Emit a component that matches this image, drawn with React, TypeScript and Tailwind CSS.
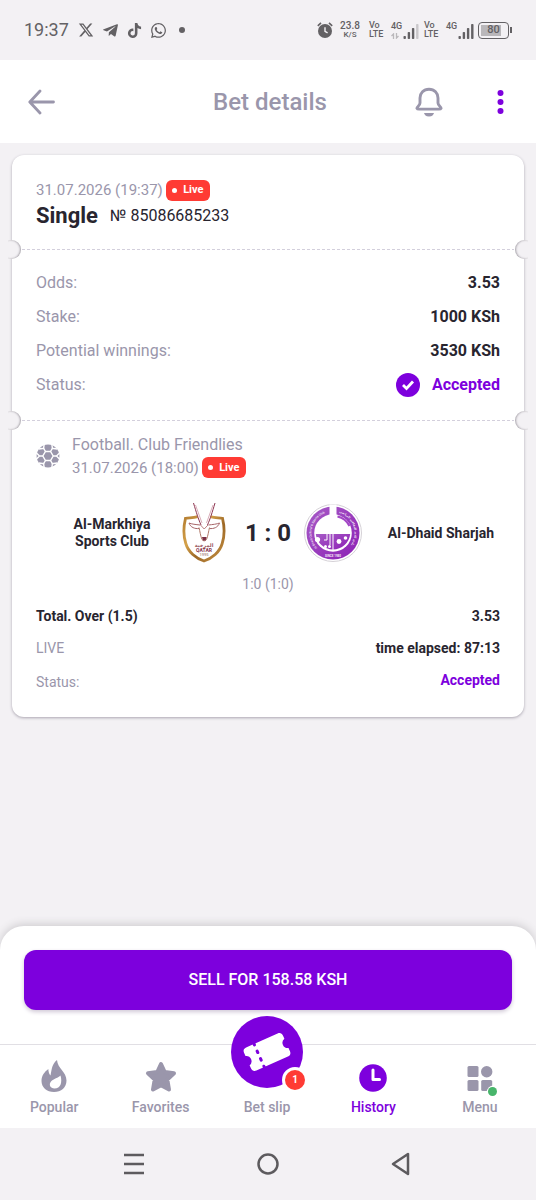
import type { ReactNode } from "react";
import { FaXTwitter, FaTiktok, FaWhatsapp } from "react-icons/fa6";
import { FaTelegramPlane } from "react-icons/fa";

function StatusBar() {
  return (
    <div className="flex h-[60px] items-center justify-between bg-[#f3f1f4] pr-6 pl-6 text-[#636164]">
      <div className="flex items-center">
        <span className="w-[54px] text-lg">19:37</span>
        <FaXTwitter className="mr-2 size-4" />
        <FaTelegramPlane className="mr-2 size-[17px]" />
        <FaTiktok className="mr-2 size-[15px]" />
        <FaWhatsapp className="mr-3 size-[17px]" />
        <span className="size-[6px] rounded-full bg-[#636164]" />
      </div>
      <div className="flex items-center">
        <svg viewBox="0 0 16 16" className="mr-[6px] size-4" aria-label="Alarm">
          <circle cx="8" cy="9" r="7" fill="currentColor" />
          <path d="M.8 3.800 4 .8M15.200 3.800 12 .8" stroke="currentColor" strokeWidth="1.6" />
          <path d="M8 5.2V9.4l2.6 1.5" stroke="#f3f1f4" strokeWidth="1.4" fill="none" />
        </svg>
        <div className="mr-[8px] w-[22px] text-center font-medium">
          <div className="text-[10px] leading-[9px]">23.8</div>
          <div className="text-[8px] leading-[9px]">K/S</div>
        </div>
        <VoLte />
        <div className="mr-[5px] flex h-[17px] w-7 items-end justify-between">
          <Network arrows />
          <Signal bars={3} />
        </div>
        <VoLte />
        <div className="mr-[4px] flex h-[17px] w-7 items-end justify-between">
          <Network />
          <Signal bars={4} />
        </div>
        <div className="flex items-center">
          <div className="flex h-[17px] w-[31px] rounded-[4px] border border-[#636164] p-[2px]">
            <div className="flex w-full items-center justify-center bg-[linear-gradient(90deg,#b9b7ba_80%,transparent_80%)] text-[11px] font-medium">
              80
            </div>
          </div>
          <div className="ml-px h-[6px] w-[2px] bg-[#636164]" />
        </div>
      </div>
    </div>
  );
}

function VoLte() {
  return (
    <div className="mr-[6px] w-4 text-[9px] leading-[9px] font-medium">
      <div>Vo</div>
      <div>LTE</div>
    </div>
  );
}

function Network({ arrows = false }: { arrows?: boolean }) {
  return (
    <div className="flex h-full w-3 flex-col">
      <span className="text-[9px] leading-[9px] font-medium">4G</span>
      {arrows && (
        <svg viewBox="0 0 8 6" className="mt-[2px] h-[6px] w-2" fill="none" stroke="#bab8bb" strokeWidth="1.3">
          <path d="M2.500 6V1L.5 3M5.500 0v5l2-2" />
        </svg>
      )}
    </div>
  );
}

function Signal({ bars }: { bars: number }) {
  const heights = [3, 7, 11, 15];
  return (
    <svg viewBox="0 0 16 16" className="h-4 w-4 shrink-0">
      {heights.map((h, i) => (
        <rect
          key={h}
          x={0.5 + i * 4.2}
          y={16 - h}
          width="2.4"
          height={h}
          rx="0.8"
          fill={i < bars ? "#636164" : "#c9c7ca"}
        />
      ))}
    </svg>
  );
}

function Header() {
  return (
    <header className="grid h-[83px] grid-cols-[1fr_auto_1fr] items-center bg-white pr-6 pl-7 text-[#9a96ab]">
      <button aria-label="Back" className="justify-self-start">
        <svg viewBox="0 0 28 26" className="h-[26px] w-7" fill="none" stroke="currentColor" strokeWidth="2.8" strokeLinecap="round" strokeLinejoin="round">
          <path d="M25.5 13H2M12 2 1.8 13 12 24" />
        </svg>
      </button>
      <h1 className="text-2xl font-medium">Bet details</h1>
      <div className="flex items-center justify-end gap-[54px] pr-2">
        <button aria-label="Notifications">
          <svg viewBox="0 0 28 30" className="h-[30px] w-7" fill="none">
            <path d="M14 2.2c-5.4 0-9 3.8-9 8.8v5.100c0 1.400-.7 2.200-2 3.400-1.800 1.700-1.200 2.600 1 2.600h20c2.200 0 2.800-.9 1-2.600-1.300-1.200-2-2-2-3.400V11c0-5-3.600-8.800-9-8.800Z" stroke="currentColor" strokeWidth="2.900" strokeLinejoin="round" />
            <path d="M9 26h10c-.5 2-1.800 3.400-5 3.400S9.500 28 9 26Z" fill="currentColor" />
          </svg>
        </button>
        <button aria-label="More options" className="text-[#7d00dd]">
          <svg viewBox="0 0 6 26" className="h-[26px] w-[7px]" fill="currentColor">
            <circle cx="3" cy="4" r="3" />
            <circle cx="3" cy="13" r="3" />
            <circle cx="3" cy="22" r="3" />
          </svg>
        </button>
      </div>
    </header>
  );
}

function LiveBadge() {
  return (
    <span className="flex h-[21px] w-11 items-center justify-center gap-[6px] rounded-md bg-[#ff3b34] text-[11px] font-bold text-white">
      <span className="size-[5px] rounded-full bg-white" />
      Live
    </span>
  );
}

function Perforation() {
  return (
    <div className="relative h-5">
      <div className="absolute inset-x-[10px] top-[9px] h-px bg-[repeating-linear-gradient(90deg,#d3cfdc_0_3px,transparent_3px_5px)]" />
      <div className="absolute top-0 -left-1 h-[19px] w-[13px] overflow-hidden">
        <div className="-ml-[6px] size-[19px] rounded-full bg-[#f3f1f4] shadow-[inset_-1px_0_2px_#aaa6ad]" />
      </div>
      <div className="absolute top-0 -right-1 flex h-[19px] w-[13px] overflow-hidden">
        <div className="size-[19px] shrink-0 rounded-full bg-[#f3f1f4] shadow-[inset_1px_0_2px_#aaa6ad]" />
      </div>
    </div>
  );
}

function DetailRow({ label, value }: { label: string; value: ReactNode }) {
  return (
    <div className="flex h-[34px] items-center justify-between">
      <dt className="text-base text-[#9a96ab]">{label}</dt>
      <dd className="flex items-center gap-3 text-base font-bold text-[#28252f]">{value}</dd>
    </div>
  );
}

function Football() {
  return (
    <svg viewBox="0 0 24 24" className="size-6" aria-label="Football">
      <circle cx="12" cy="12" r="11.400" fill="#9a96ab" />
      <g stroke="#fff" strokeWidth="1.400" fill="none">
        <path d="m9.500 7.500h5L17.200 12l-2.700 4.500h-5L6.800 12Z" />
        <path d="M9.500 7.500 7.600 4.300M14.500 7.500l1.900-3.200M17.200 12h3.300M14.500 16.500l1.900 3.200M9.500 16.500l-1.900 3.200M6.800 12H3.500" />
        <path d="M8.200 0 7.600 4.300 2.800 5M15.800 0l.6 4.300 4.800.7M0 8.500 3.500 12 0 15.500M24 8.500 20.500 12l3.500 3.500M2.800 19l4.800.7.600 4.300M21.200 19l-4.800.7-.6 4.300" />
      </g>
    </svg>
  );
}

function HomeCrest() {
  return (
    <svg viewBox="-8 0 60 60" className="size-[60px]" aria-label="Al-Markhiya Sports Club crest">
      <defs>
        <linearGradient id="gold" x1="0" y1="0" x2="1" y2="1">
          <stop offset="0" stopColor="#b27b2f" />
          <stop offset=".35" stopColor="#d5a24a" />
          <stop offset=".6" stopColor="#9c6725" />
          <stop offset="1" stopColor="#c89345" />
        </linearGradient>
      </defs>
      <path d="M22 11.500c-7 3.700-13 3-18.500 3.800-2 8-2 18 .3 25.200C6.200 49 14 55.500 22 58c8-2.500 15.800-9 18.200-17.500 2.300-7.200 2.300-17.200.3-25.200C35 14.500 29 15.200 22 11.500Z" fill="#fff" stroke="url(#gold)" strokeWidth="2.800" />
      <path d="M14 9h16l-3 9h-10Z" fill="#fff" />
      <g fill="none" stroke="#8d3550" strokeWidth="1">
        <path d="M11.500 0c3 10 4.500 15 7.500 22M33 0c-3 10-4.500 15-7.500 22" />
        <path d="M13.500 2 20 20M31 2l-6.500 18" stroke="#c98a99" strokeWidth=".7" />
        <path d="M18 22c-4-.5-8.500-.8-11-2 1.500 4.500 6 6 10 5.500M26.500 22c4-.5 8.500-.8 11-2-1.500 4.500-6 6-10 5.500" stroke="#a76569" />
        <path d="M17 24.500c1 4 1.500 8.500 3 12 1.400 1.800 3 1.800 4.500 0 1.500-3.500 2-8 3-12" stroke="#b07868" />
        <path d="m18.500 22 3.700 4 3.800-4" stroke="#bd7f82" />
      </g>
      <path d="M20 34h4.600l-.9 3.500h-2.800Z" fill="#7b3045" />
      <text x="22" y="44" textAnchor="middle" fill="#9a5860" className="font-['DejaVu_Sans',sans-serif] text-[5px]">المرخية</text>
      <text x="22" y="49" textAnchor="middle" fill="#86324a" className="text-[5px] font-bold">QATAR</text>
      <text x="22" y="53" textAnchor="middle" fill="#b59a95" className="text-[4px]">1995</text>
    </svg>
  );
}

function AwayCrest() {
  return (
    <svg viewBox="0 0 60 60" className="size-[60px]" aria-label="Al-Dhaid Sharjah crest">
      <defs>
        <linearGradient id="violet" x1="0" y1="0" x2="1" y2="1">
          <stop offset="0" stopColor="#a75bc6" />
          <stop offset="1" stopColor="#8c20b5" />
        </linearGradient>
        <path id="ringLeft" d="M15 45.600A21.600 21.600 0 0 1 26 8.800" />
        <path id="ringRight" d="M34 8.800A21.600 21.600 0 0 1 45 45.600" />
      </defs>
      <circle cx="30" cy="30" r="28.500" fill="#fff" stroke="#d5d1d7" />
      <circle cx="30" cy="30" r="26.500" fill="url(#violet)" />
      <circle cx="30" cy="30" r="18.800" fill="#fff" />
      <path d="M12.800 31h34.400a17.300 17.300 0 0 1-34.400 0Z" fill="url(#violet)" />
      <path d="M26.500 1.500h7V30h-7Z" fill="#fff" />
      <path d="M34.500 13.500c5.500 1.200 9.500 4.500 12 9.500" fill="none" stroke="#a348c6" strokeWidth="2.200" />
      <g stroke="#fff" fill="none" strokeWidth="1">
        <path d="M24 31v6h-3M27 31v11M30 31v17" />
      </g>
      <g fill="#fff">
        <circle cx="14.500" cy="36.500" r="2.600" />
        <circle cx="22.500" cy="43.500" r="1.500" />
        <circle cx="26.500" cy="43.500" r="1.500" />
        <circle cx="36" cy="38.500" r="2.400" />
        <circle cx="42.500" cy="35" r="1.800" />
      </g>
      <text fill="#f3e8f7" className="text-[3px] font-medium">
        <textPath href="#ringLeft" startOffset="1">Al Dhaid Cultural &amp; Sports Club</textPath>
      </text>
      <text fill="#f3e8f7" className="font-['DejaVu_Sans',sans-serif] text-[3px]">
        <textPath href="#ringRight" startOffset="2">نادي الذيد الثقافي الرياضي</textPath>
      </text>
      <text x="30" y="54" textAnchor="middle" fill="#f3e8f7" className="text-[3px]">SINCE 1980</text>
    </svg>
  );
}

function BetCard() {
  return (
    <article className="rounded-xl bg-white pb-[17px] shadow-[0_1px_3px_#aaa5b0]">
      <div className="px-6 pt-6 pb-[10px]">
        <div className="flex items-center gap-[3px]">
          <span className="text-[15px] text-[#9a96ab]">31.07.2026 (19:37)</span>
          <LiveBadge />
        </div>
        <div className="flex h-7 items-center gap-3 text-[#28252f]">
          <h2 className="text-[22px] font-bold">Single</h2>
          <span className="text-base">№ 85086685233</span>
        </div>
      </div>
      <Perforation />
      <dl className="px-6 pt-[6px] pb-[9px]">
        <DetailRow label="Odds:" value="3.53" />
        <DetailRow label="Stake:" value="1000 KSh" />
        <DetailRow label="Potential winnings:" value="3530 KSh" />
        <DetailRow
          label="Status:"
          value={
            <>
              <svg viewBox="0 0 24 24" className="size-6" fill="none">
                <circle cx="12" cy="12" r="12" fill="#7d00dd" />
                <path d="m7 12 3.500 3.500 6.500-7" stroke="#fff" strokeWidth="2.800" />
              </svg>
              <span className="text-[#7d00dd]">Accepted</span>
            </>
          }
        />
      </dl>
      <Perforation />
      <section className="px-6 pt-[2px]">
        <div className="flex items-center gap-3">
          <Football />
          <div className="text-[#9a96ab]">
            <p className="text-base">Football. Club Friendlies</p>
            <div className="flex items-center gap-[3px]">
              <span className="text-[15px]">31.07.2026 (18:00)</span>
              <LiveBadge />
            </div>
          </div>
        </div>
        <div className="mt-6 grid grid-cols-[1fr_auto_1fr] items-center text-sm leading-[17px] font-bold text-[#28252f]">
          <h3 className="justify-self-end pr-[23px] text-center">
            Al-Markhiya
            <br />
            Sports Club
          </h3>
          <div className="flex items-center">
            <HomeCrest />
            <span className="w-[69px] text-center text-2xl font-bold">1 : 0</span>
            <AwayCrest />
          </div>
          <h3 className="justify-self-end pr-[6px] text-center whitespace-nowrap">Al-Dhaid Sharjah</h3>
        </div>
        <p className="mt-[11px] text-center text-sm text-[#9a96ab]">1:0 (1:0)</p>
        <div className="mt-[6px] text-sm font-bold text-[#28252f]">
          <div className="flex h-8 items-center justify-between">
            <span>Total. Over (1.5)</span>
            <span>3.53</span>
          </div>
          <div className="flex h-8 items-center justify-between">
            <span className="font-normal text-[#9a96ab]">LIVE</span>
            <span>time elapsed: 87:13</span>
          </div>
          <div className="flex h-9 items-center justify-between">
            <span className="font-normal text-[#9a96ab]">Status:</span>
            <span className="pb-1 text-[#7d00dd]">Accepted</span>
          </div>
        </div>
      </section>
    </article>
  );
}

function NavItem({ label, active = false, children }: { label: string; active?: boolean; children: ReactNode }) {
  return (
    <a
      href="#"
      aria-current={active ? "page" : undefined}
      className={`relative flex flex-1 flex-col items-center justify-end gap-[3px] pb-[10px] text-sm leading-[22px] font-medium ${active ? "text-[#7d00dd]" : "text-[#9a96ab]"}`}
    >
      {children}
      <span>{label}</span>
    </a>
  );
}

function BottomNav() {
  return (
    <nav className="flex h-[84px] border-t border-[#e1dfe4] pr-[3px] pl-px">
      <NavItem label="Popular">
        <svg viewBox="0 0 26 34" className="h-[34px] w-[26px]" fill="currentColor">
          <path fillRule="evenodd" d="M16 1c.7 9 9.500 11.500 9.500 20.500C25.500 28.500 20.200 33 13 33S.5 28.500.5 22c0-5.500 3-9 6.800-12 .2 3 .7 5 2.200 6.500C10.800 10 11 5 16 1Zm3.500 15.500c-2 2.500-7 3-9.500 6-2.500 3-.8 7 3.500 7 6 0 8-6 6-13Z" />
        </svg>
      </NavItem>
      <NavItem label="Favorites">
        <svg viewBox="0 0 34 34" className="size-[34px]" fill="currentColor" stroke="currentColor" strokeWidth="4" strokeLinejoin="round">
          <path d="m17 5 3.700 8 9.300 1.200-6.700 6.300 1.700 10L17 26.300 9 30.500l1.700-10L4 14.200l9.300-1.200Z" />
        </svg>
      </NavItem>
      <NavItem label="Bet slip">
        <div className="absolute bottom-10 left-1/2 size-[72px] -translate-x-1/2">
          <svg viewBox="0 0 71 71" className="size-full">
            <circle cx="35.500" cy="35.500" r="35.500" fill="#7d00dd" />
            <g transform="rotate(-24 35.500 35.500)">
              <path d="M18.500 23h34c2.500 0 4 1.500 4 4v3.500a5.200 5.200 0 0 0 0 10V44c0 2.500-1.500 4-4 4h-34c-2.500 0-4-1.500-4-4v-3.500a5.200 5.200 0 0 0 0-10V27c0-2.500 1.500-4 4-4Z" fill="#fff" />
              <path d="M27 22.500v27" stroke="#7d00dd" strokeWidth="3" strokeLinecap="round" strokeDasharray="1.600 6.600" />
            </g>
          </svg>
          <span className="absolute -right-[5px] -bottom-[5px] flex size-[26px] items-center justify-center rounded-full border-[3px] border-white bg-[#ff3b34] text-[10px] font-bold text-white">
            1
          </span>
        </div>
      </NavItem>
      <NavItem label="History" active>
        <svg viewBox="0 0 28 34" className="h-[34px] w-7" fill="none">
          <circle cx="14" cy="19" r="13.800" fill="currentColor" />
          <path d="M14 11v9.500h6.500" stroke="#fff" strokeWidth="3" strokeLinecap="round" strokeLinejoin="round" />
        </svg>
      </NavItem>
      <NavItem label="Menu">
        <svg viewBox="0 0 30 34" className="h-[34px] w-[30px]" fill="currentColor">
          <rect x="2.500" y="7" width="11" height="11" rx="1.500" />
          <circle cx="21.700" cy="12.800" r="5.700" />
          <rect x="2.500" y="21" width="11" height="11" rx="1.500" />
          <rect x="16.200" y="21" width="11" height="11" rx="1.500" />
          <circle cx="28.300" cy="33" r="6.500" fill="#fff" />
        </svg>
        <span className="absolute top-[42px] left-1/2 ml-2 size-[9px] rounded-full bg-[#48b56b]" />
      </NavItem>
    </nav>
  );
}

function SystemNav() {
  return (
    <div className="flex h-[72px] items-center justify-center gap-[110px] bg-[#f3f1f4] text-[#5d5b5e]">
      <button aria-label="Recent apps">
        <svg viewBox="0 0 24 24" className="size-6" stroke="currentColor" strokeWidth="2.500">
          <path d="M2 3h20M2 12h20M2 21h20" />
        </svg>
      </button>
      <button aria-label="Home">
        <svg viewBox="0 0 24 24" className="size-6" fill="none" stroke="currentColor" strokeWidth="2.500">
          <circle cx="12" cy="12" r="9.500" />
        </svg>
      </button>
      <button aria-label="System back">
        <svg viewBox="0 0 24 24" className="size-6" fill="none" stroke="currentColor" strokeWidth="2.500" strokeLinejoin="round">
          <path d="M18 2v20L3 12Z" />
        </svg>
      </button>
    </div>
  );
}

export default function App() {
  return (
    <div className="flex min-h-screen flex-col bg-[#f3f1f4] font-['Roboto',sans-serif]">
      <StatusBar />
      <Header />
      <main className="flex-1 px-3 pt-3 pb-6">
        <BetCard />
      </main>
      <footer>
        <div className="rounded-t-3xl bg-white shadow-[0_-2px_8px_#cfcdd0]">
          <div className="px-6 pt-6 pb-[34px]">
            <button className="h-[60px] w-full rounded-xl bg-[#7d00dd] text-base font-medium text-white shadow-[0_2px_4px_#d0c8d6]">
              SELL FOR 158.58 KSH
            </button>
          </div>
          <BottomNav />
        </div>
        <SystemNav />
      </footer>
    </div>
  );
}
